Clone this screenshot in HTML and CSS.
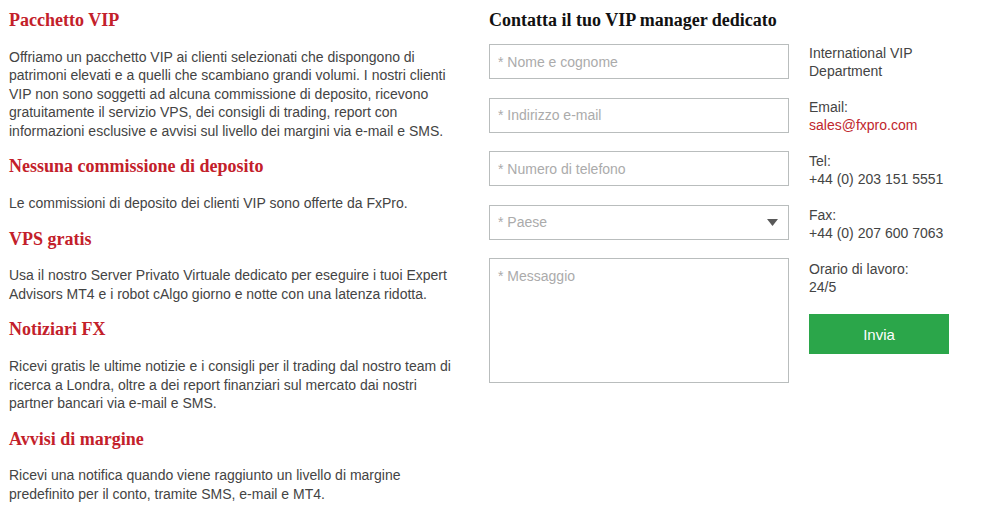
FILE: index.html
```html
<!DOCTYPE html>
<html lang="it">
<head>
<meta charset="utf-8">
<title>Pacchetto VIP</title>
<link rel="stylesheet" href="styles.css">
</head>
<body>
<div class="page">
  <div class="info-col">
    <h2 class="title">Pacchetto VIP</h2>
    <p class="text">Offriamo un pacchetto VIP ai clienti selezionati che dispongono di patrimoni elevati e a quelli che scambiano grandi volumi. I nostri clienti VIP non sono soggetti ad alcuna commissione di deposito, ricevono gratuitamente il servizio VPS, dei consigli di trading, report con informazioni esclusive e avvisi sul livello dei margini via e-mail e SMS.</p>
    <h2 class="title">Nessuna commissione di deposito</h2>
    <p class="text">Le commissioni di deposito dei clienti VIP sono offerte da FxPro.</p>
    <h2 class="title">VPS gratis</h2>
    <p class="text">Usa il nostro Server Privato Virtuale dedicato per eseguire i tuoi Expert Advisors MT4 e i robot cAlgo giorno e notte con una latenza ridotta.</p>
    <h2 class="title">Notiziari FX</h2>
    <p class="text">Ricevi gratis le ultime notizie e i consigli per il trading dal nostro team di ricerca a Londra, oltre a dei report finanziari sul mercato dai nostri partner bancari via e-mail e SMS.</p>
    <h2 class="title">Avvisi di margine</h2>
    <p class="text">Ricevi una notifica quando viene raggiunto un livello di margine predefinito per il conto, tramite SMS, e-mail e MT4.</p>
  </div>
  <div class="contact-col">
    <h2 class="contact-title">Contatta il tuo VIP manager dedicato</h2>
    <div class="contact-row">
      <form class="form">
        <input class="field" type="text" placeholder="* Nome e cognome">
        <input class="field" type="text" placeholder="* Indirizzo e-mail">
        <input class="field" type="text" placeholder="* Numero di telefono">
        <div class="select-wrap">
          <select class="field select">
            <option>* Paese</option>
          </select>
          <svg class="arrow" width="11" height="7" viewBox="0 0 11 7"><path d="M0 0H11L5.5 7Z" fill="#595959"/></svg>
        </div>
        <textarea class="field area" placeholder="* Messaggio"></textarea>
      </form>
      <div class="details">
        <p class="detail">International VIP<br>Department</p>
        <p class="detail">Email:<br><a class="mail" href="#">sales@fxpro.com</a></p>
        <p class="detail">Tel:<br>+44 (0) 203 151 5551</p>
        <p class="detail">Fax:<br>+44 (0) 207 600 7063</p>
        <p class="detail">Orario di lavoro:<br>24/5</p>
        <button class="send" type="button">Invia</button>
      </div>
    </div>
  </div>
</div>
</body>
</html>
```
FILE: styles.css
```css
html, body {
  margin: 0;
  padding: 0;
  background: #ffffff;
}

.page {
  display: flex;
  align-items: flex-start;
  padding: 9px 0 0 9px;
  font-family: "Liberation Sans", Arial, sans-serif;
  font-size: 14px;
  color: #444444;
}

.info-col {
  width: 452px;
  flex: none;
}

.title {
  margin: 0 0 16.75px;
  font-family: "Liberation Serif", "Times New Roman", serif;
  font-weight: bold;
  font-size: 18px;
  line-height: 22px;
  color: #c3202a;
}

.text {
  margin: 0 0 15px;
  line-height: 18.5px;
}

.contact-col {
  margin-left: 28px;
  display: flex;
  flex-direction: column;
}

.contact-title {
  margin: 0 0 13px;
  font-family: "Liberation Serif", "Times New Roman", serif;
  font-weight: bold;
  font-size: 18px;
  line-height: 22px;
  color: #111111;
}

.contact-row {
  display: flex;
  align-items: flex-start;
}

.form {
  width: 300px;
  display: flex;
  flex-direction: column;
  margin: 0;
}

.field {
  box-sizing: border-box;
  width: 300px;
  height: 35px;
  margin: 0 0 18.5px;
  padding: 0 8px;
  border: 1px solid #b9bdbd;
  border-radius: 0;
  background: #ffffff;
  font-family: "Liberation Sans", Arial, sans-serif;
  font-size: 14px;
  color: #ababab;
  outline: none;
}

.field::placeholder {
  color: #ababab;
  opacity: 1;
}

.select-wrap {
  position: relative;
  display: flex;
}

.select {
  appearance: none;
  -webkit-appearance: none;
}

.arrow {
  position: absolute;
  right: 11px;
  top: 14px;
}

.area {
  height: 125px;
  padding: 9px 8px;
  resize: none;
  margin-bottom: 0;
}

.details {
  margin-left: 20px;
  width: 170px;
}

.detail {
  margin: 0 0 18px;
  line-height: 18px;
}

.mail {
  color: #c0262d;
  text-decoration: none;
}

.send {
  width: 140px;
  height: 40px;
  border: none;
  border-radius: 0;
  background: #2ba64a;
  color: #ffffff;
  font-family: "Liberation Sans", Arial, sans-serif;
  font-size: 15px;
  padding: 0;
}
```
